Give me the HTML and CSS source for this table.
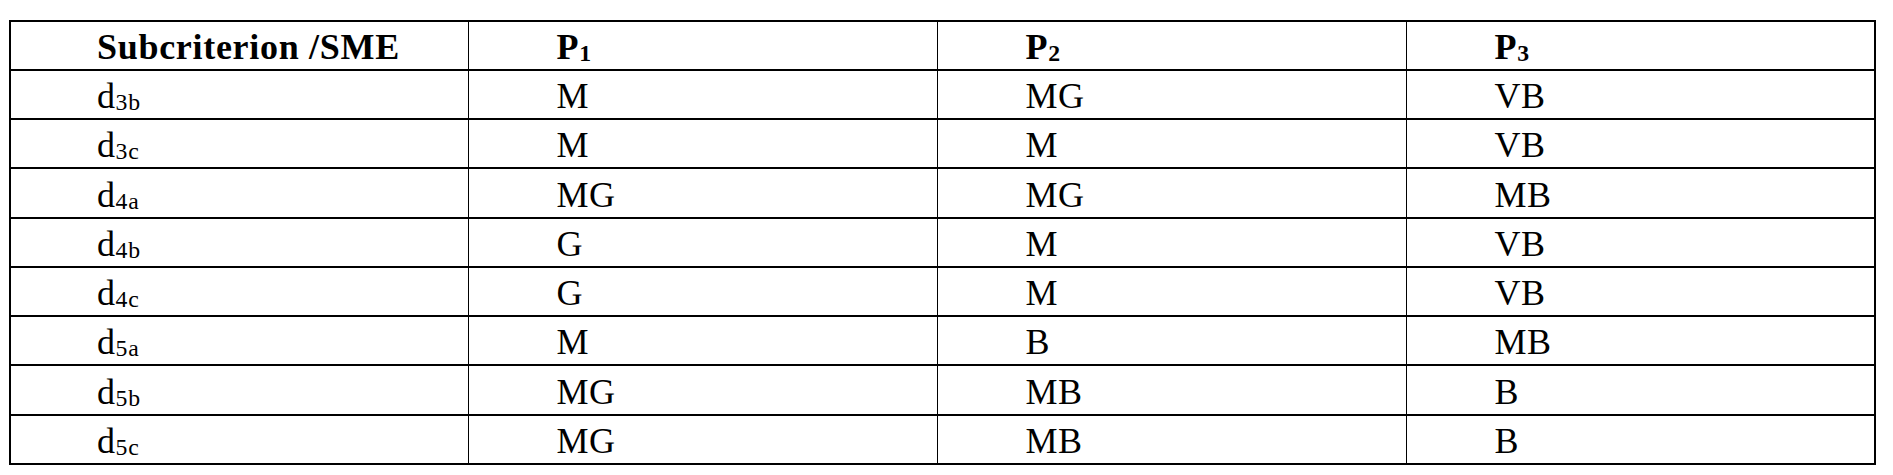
FILE: index.html
```html
<!DOCTYPE html>
<html lang="en">
<head>
<meta charset="utf-8">
<title>Subcriterion / SME ratings</title>
<link rel="stylesheet" href="styles.css">
</head>
<body>
<table class="ratings">
  <colgroup>
    <col class="c-sub">
    <col class="c-p">
    <col class="c-p">
    <col class="c-p">
  </colgroup>
  <thead>
    <tr>
      <th>Subcriterion /SME</th>
      <th>P<sub>1</sub></th>
      <th>P<sub>2</sub></th>
      <th>P<sub>3</sub></th>
    </tr>
  </thead>
  <tbody>
    <tr><td>d<sub>3b</sub></td><td>M</td><td>MG</td><td>VB</td></tr>
    <tr><td>d<sub>3c</sub></td><td>M</td><td>M</td><td>VB</td></tr>
    <tr><td>d<sub>4a</sub></td><td>MG</td><td>MG</td><td>MB</td></tr>
    <tr><td>d<sub>4b</sub></td><td>G</td><td>M</td><td>VB</td></tr>
    <tr><td>d<sub>4c</sub></td><td>G</td><td>M</td><td>VB</td></tr>
    <tr><td>d<sub>5a</sub></td><td>M</td><td>B</td><td>MB</td></tr>
    <tr><td>d<sub>5b</sub></td><td>MG</td><td>MB</td><td>B</td></tr>
    <tr><td>d<sub>5c</sub></td><td>MG</td><td>MB</td><td>B</td></tr>
  </tbody>
</table>
</body>
</html>
```

FILE: styles.css
```css
html, body {
  background: #ffffff;
}

body {
  margin: 0;
  padding: 20px 0 0 9px;
  font-family: "Liberation Serif", "Times New Roman", serif;
  color: #000000;
}

.ratings {
  border-collapse: collapse;
  table-layout: fixed;
  width: 1866px;
  border: 2px solid #000;
}

.ratings .c-sub {
  width: 458px;
}

.ratings .c-p {
  width: 469px;
}

.ratings tr {
  height: 49px;
}

.ratings tbody tr:nth-child(3),
.ratings tbody tr:nth-child(7) {
  height: 50px;
}

.ratings th,
.ratings td {
  padding: 0 0 1px 88px;
  text-align: left;
  vertical-align: bottom;
  white-space: nowrap;
  border-top: 2px solid #000;
  border-bottom: 2px solid #000;
  border-left: 1px solid #000;
  border-right: 1px solid #000;
  line-height: normal;
}

.ratings th:first-child,
.ratings td:first-child {
  padding-left: 86px;
  border-left: 2px solid #000;
}

.ratings th:last-child,
.ratings td:last-child {
  border-right: 2px solid #000;
}

.ratings th {
  font-size: 36px;
  font-weight: bold;
  letter-spacing: 0.7px;
}

.ratings td {
  font-size: 36px;
  font-weight: normal;
  letter-spacing: 0.6px;
}

.ratings sub {
  font-size: 0.66em;
  vertical-align: -2px;
  line-height: 0;
  letter-spacing: 0.8px;
}
```
